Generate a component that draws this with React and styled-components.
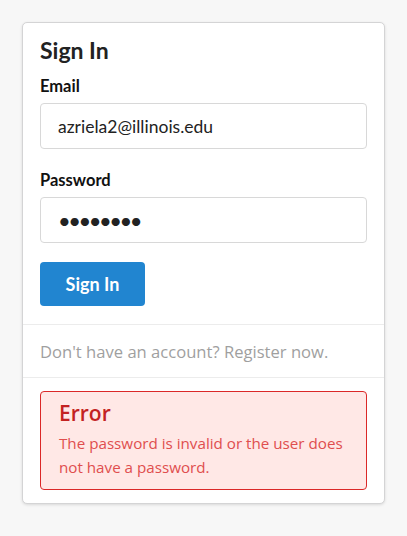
import React from 'react';
import styled, { createGlobalStyle } from 'styled-components';

const GlobalStyle = createGlobalStyle`
  body {
    margin: 0;
    background: #f7f7f7;
    font-family: Lato, "Open Sans", sans-serif;
    color: #222;
  }
`;

const Page = styled.div`
  padding: 22px;
`;

const Card = styled.div`
  width: 363px;
  box-sizing: border-box;
  background: #fff;
  border: 1px solid #d4d4d5;
  border-radius: 5px;
  box-shadow: 0 1px 3px rgba(0, 0, 0, 0.12);
`;

const Section = styled.div`
  padding: ${props => props.pad || '14px 17px 18px'};
  border-top: ${props => (props.divided ? '1px solid #ececec' : 'none')};
`;

const Title = styled.h2`
  margin: 0 0 14px;
  font-family: Lato, sans-serif;
  font-size: 23px;
  font-weight: 700;
  line-height: 26px;
  color: #222;
`;

const Field = styled.div`
  margin-bottom: 22px;
`;

const Label = styled.label`
  display: block;
  margin-bottom: 8px;
  font-family: Lato, sans-serif;
  font-size: 16.5px;
  font-weight: 700;
  line-height: 18px;
  color: #111;
`;

const Input = styled.input`
  display: block;
  width: 100%;
  height: 46px;
  box-sizing: border-box;
  padding: 0 17px;
  border: 1px solid #d8d8d8;
  border-radius: 4px;
  font-family: Lato, sans-serif;
  font-size: ${props => (props.type === 'password' ? '22px' : '17.5px')};
  letter-spacing: ${props => (props.type === 'password' ? '-2.5px' : '0')};
  color: #222;
  outline: none;
  background: #fff;
`;

const Button = styled.button`
  width: 105px;
  height: 44px;
  margin-top: -3px;
  border: none;
  border-radius: 4px;
  background: #2185d0;
  color: #fff;
  font-family: Lato, sans-serif;
  font-size: 18px;
  font-weight: 700;
`;

const Muted = styled.p`
  margin: 0;
  font-family: "Open Sans", sans-serif;
  font-size: 16.6px;
  line-height: 18px;
  color: #9f9f9f;
`;

const ErrorBox = styled.div`
  padding: 8px 18px 10px;
  background: #ffe8e6;
  border: 1px solid #db2828;
  border-radius: 4px;
`;

const ErrorTitle = styled.div`
  font-family: "Open Sans", sans-serif;
  font-size: 21px;
  font-weight: 600;
  line-height: 26px;
  color: #c32222;
  margin-bottom: 5px;
`;

const ErrorText = styled.p`
  margin: 0;
  font-family: "Open Sans", sans-serif;
  font-size: 15.2px;
  line-height: 24px;
  color: #e04e4e;
`;

export default function App() {
  return (
    <>
      <GlobalStyle />
      <Page>
        <Card>
          <Section>
            <Title>Sign In</Title>
            <Field>
              <Label>Email</Label>
              <Input type="text" readOnly value="azriela2@illinois.edu" />
            </Field>
            <Field>
              <Label>Password</Label>
              <Input type="password" readOnly value="12345678" />
            </Field>
            <Button>Sign In</Button>
          </Section>
          <Section divided pad="18px 17px 16px">
            <Muted>Don't have an account? Register now.</Muted>
          </Section>
          <Section divided pad="13px 17px">
            <ErrorBox>
              <ErrorTitle>Error</ErrorTitle>
              <ErrorText>The password is invalid or the user does not have a password.</ErrorText>
            </ErrorBox>
          </Section>
        </Card>
      </Page>
    </>
  );
}
